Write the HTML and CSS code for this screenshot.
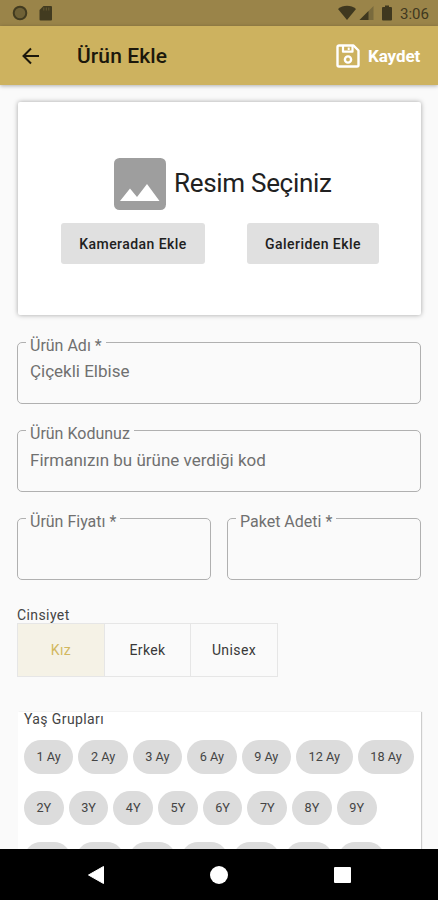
FILE: index.html
```html
<!DOCTYPE html>
<html lang="tr">
<head>
<meta charset="utf-8">
<title>Ürün Ekle</title>
<link rel="stylesheet" href="styles.css">
</head>
<body>
<div class="screen">
  <div class="status">
    <svg class="s-circle" width="16" height="16" viewBox="0 0 16 16"><circle cx="8" cy="8" r="6.3" fill="#6f6136" stroke="#423b20" stroke-width="2"/></svg>
    <svg class="s-card" width="14" height="16" viewBox="0 0 14 16"><path d="M4.5 1H12a1 1 0 0 1 1 1v12.500a1 1 0 0 1-1 1H1.500a1 1 0 0 1-1-1V5z" fill="#423b20"/><path d="M4.800 2.500v3M7.300 2.500v3M9.800 2.500v3" stroke="#675a33" stroke-width="1"/></svg>
    <span class="spacer"></span>
    <svg class="s-wifi" width="18" height="16" viewBox="0 0 18 16"><path d="M0 4C5-.3 13-.3 18 4L9 15z" fill="#3f381f"/></svg>
    <svg class="s-signal" width="15" height="16" viewBox="0 0 15 16"><path d="M14.500 1v14H.5z" fill="#796a3d"/><path d="M9.500 6v9h-9z" fill="#3f381f"/></svg>
    <svg class="s-battery" width="10" height="16" viewBox="0 0 10 16"><path d="M3 .5h4V2h2a1 1 0 0 1 1 1v11.500a1 1 0 0 1-1 1H1a1 1 0 0 1-1-1V3a1 1 0 0 1 1-1h2z" fill="#3f381f"/></svg>
    <span class="clock">3:06</span>
  </div>
  <header class="appbar">
    <svg class="back" width="18" height="18" viewBox="0 0 18 18"><path d="M17 9H1.500M9 1.500L1.500 9L9 16.500" fill="none" stroke="#1c180c" stroke-width="2"/></svg>
    <h1 class="title">Ürün Ekle</h1>
    <span class="spacer"></span>
    <svg class="save" width="24" height="24" viewBox="0 0 24 24" fill="none" stroke="#fff" stroke-width="2.400" stroke-linejoin="round"><path d="M3 1.500h14.500l5 5V21a1.500 1.500 0 0 1-1.500 1.500H3A1.500 1.500 0 0 1 1.500 21V3A1.500 1.500 0 0 1 3 1.500z"/><path d="M7 2v5.700h9.500V2" stroke-width="2.200"/><path d="M12.700 3.500v2.500" stroke-width="2"/><circle cx="12" cy="15.500" r="3.100"/></svg>
    <span class="save-text">Kaydet</span>
  </header>
  <main class="content">
    <section class="picker">
      <div class="picker-head">
        <svg width="52" height="52" viewBox="0 0 52 52"><rect width="52" height="52" rx="5.500" fill="#9e9e9e"/><path d="M6 43L16 30.500L23 39L33 26L45.500 43z" fill="#fff"/></svg>
        <span class="picker-text">Resim Seçiniz</span>
      </div>
      <div class="picker-actions">
        <button class="btn btn-camera">Kameradan Ekle</button>
        <button class="btn btn-gallery">Galeriden Ekle</button>
      </div>
    </section>
    <fieldset class="field"><legend>Ürün Adı *</legend><span>Çiçekli Elbise</span></fieldset>
    <fieldset class="field"><legend>Ürün Kodunuz</legend><span>Firmanızın bu ürüne verdiği kod</span></fieldset>
    <div class="pair">
      <fieldset class="field"><legend>Ürün Fiyatı *</legend></fieldset>
      <fieldset class="field"><legend>Paket Adeti *</legend></fieldset>
    </div>
    <div class="label">Cinsiyet</div>
    <div class="segments">
      <div class="segment active">Kız</div>
      <div class="segment">Erkek</div>
      <div class="segment">Unisex</div>
    </div>
    <section class="ages">
      <div class="ages-title">Yaş Grupları</div>
      <div class="chips months"><span>1 Ay</span><span>2 Ay</span><span>3 Ay</span><span>6 Ay</span><span>9 Ay</span><span class="wide">12 Ay</span><span class="wide">18 Ay</span></div>
      <div class="chips years"><span>2Y</span><span>3Y</span><span>4Y</span><span>5Y</span><span>6Y</span><span>7Y</span><span>8Y</span><span>9Y</span></div>
      <div class="chips more"><span></span><span></span><span></span><span></span><span></span><span></span><span></span></div>
    </section>
  </main>
  <nav class="navbar">
    <svg width="18" height="20" viewBox="0 0 18 20"><path d="M16.500 1.500v17L1.500 10z" fill="#fff" stroke="#fff" stroke-linejoin="round"/></svg>
    <svg width="18" height="20" viewBox="0 0 18 20"><circle cx="9" cy="10" r="9" fill="#fff"/></svg>
    <svg width="18" height="20" viewBox="0 0 18 20"><rect x="1" y="2" width="17" height="16" rx="1" fill="#fff"/></svg>
  </nav>
</div>
</body>
</html>
```
FILE: styles.css
```css
* { box-sizing: border-box; }
body { margin: 0; font-family: Roboto, sans-serif; background: #fafafa; }
svg { display: block; flex: none; }
.screen { width: 438px; height: 900px; display: flex; flex-direction: column; overflow: hidden; }
.spacer { flex: 1; }

.status { flex: none; height: 26px; background: #9a8449; display: flex; align-items: center; padding: 0 8px 0 12px; }
.s-card { margin-left: 11px; }
.s-signal { margin-left: 3px; }
.s-battery { margin-left: 8px; margin-right: 1px; }
.clock { width: 30px; margin-left: 7px; font-size: 15px; line-height: 26px; color: #3f381f; padding-top: 2px; white-space: nowrap; }

.appbar { flex: none; height: 59px; background: #cdb25f; display: flex; align-items: center; padding: 1px 18px 0 22px; box-shadow: 0 1px 4px rgba(0,0,0,.3); position: relative; }
.title { margin: 0 0 0 37px; font-size: 21px; font-weight: 500; color: #1c180c; letter-spacing: .1px; white-space: nowrap; }
.save-text { width: 52px; margin-left: 8px; font-size: 17px; font-weight: 700; color: #fff; letter-spacing: -.1px; white-space: nowrap; }

.content { flex: 1; min-height: 0; overflow: hidden; padding: 17px 17px 0; }
.picker { height: 213px; background: #fff; border-radius: 2px; box-shadow: 0 0 5px rgba(0,0,0,.35); padding: 56px 42px 0 43px; margin-left: 1px; }
.picker-head { display: flex; align-items: center; padding-left: 53px; }
.picker-text { margin-left: 8px; margin-top: -2px; font-size: 26px; letter-spacing: -.3px; color: #212121; white-space: nowrap; }
.picker-actions { display: flex; justify-content: space-between; margin-top: 13px; }
.btn { height: 41px; border: 0; border-radius: 3px; background: #e0e0e0; font: 500 14px Roboto, sans-serif; letter-spacing: .45px; color: #212121; padding: 0; white-space: nowrap; }
.btn-camera { width: 144px; }
.btn-gallery { width: 132px; }

.field { width: 100%; min-width: 0; height: 71px; margin: 18px 0 0; border: 1px solid #b0b0b0; border-radius: 5px; padding: 0 12px; color: #707070; font-size: 17px; }
.field + .field { margin-top: 17px; }
.field legend { height: 18px; line-height: 18px; font-size: 16px; padding: 4px 4px 0; margin-left: -4px; white-space: nowrap; }
.field span { display: block; line-height: 22px; margin-top: 9px; white-space: nowrap; }
.field + .field span { margin-top: 10px; }
.pair { display: grid; grid-template-columns: 1fr 1fr; gap: 16px; }
.pair .field, .pair .field + .field { margin-top: 17px; }

.label { margin-top: 26px; height: 17px; line-height: 18px; font-size: 14px; letter-spacing: .4px; color: #444; }
.segments { width: 261px; height: 54px; border: 1px solid #e6e6e6; display: grid; grid-template-columns: 87px 86px 86px; }
.segment { display: flex; align-items: center; justify-content: center; font-size: 14px; letter-spacing: .4px; color: #383838; border-right: 1px solid #e6e6e6; }
.segment:last-child { border-right: 0; }
.segment.active { background: #f5f2e6; color: #d2b85f; }

.ages { margin: 35px 0 0 1px; height: 220px; background: #fff; padding-left: 6px; box-shadow: 1px 0 1px rgba(0,0,0,.18); }
.ages-title { height: 28px; line-height: 15px; font-size: 14px; letter-spacing: .4px; color: #444; }
.chips { display: flex; gap: 5px; margin-bottom: 17px; }
.chips span { flex: none; width: 49.400px; height: 34px; border-radius: 17px; background: #dcdcdc; color: #444; font-size: 12.700px; line-height: 34px; text-align: center; }
.chips .wide { width: 56.700px; }
.years span { width: 39.700px; }
.more span { width: 47.300px; }

.navbar { flex: none; height: 51px; background: #000; display: flex; align-items: center; justify-content: center; gap: 105px; }
```
